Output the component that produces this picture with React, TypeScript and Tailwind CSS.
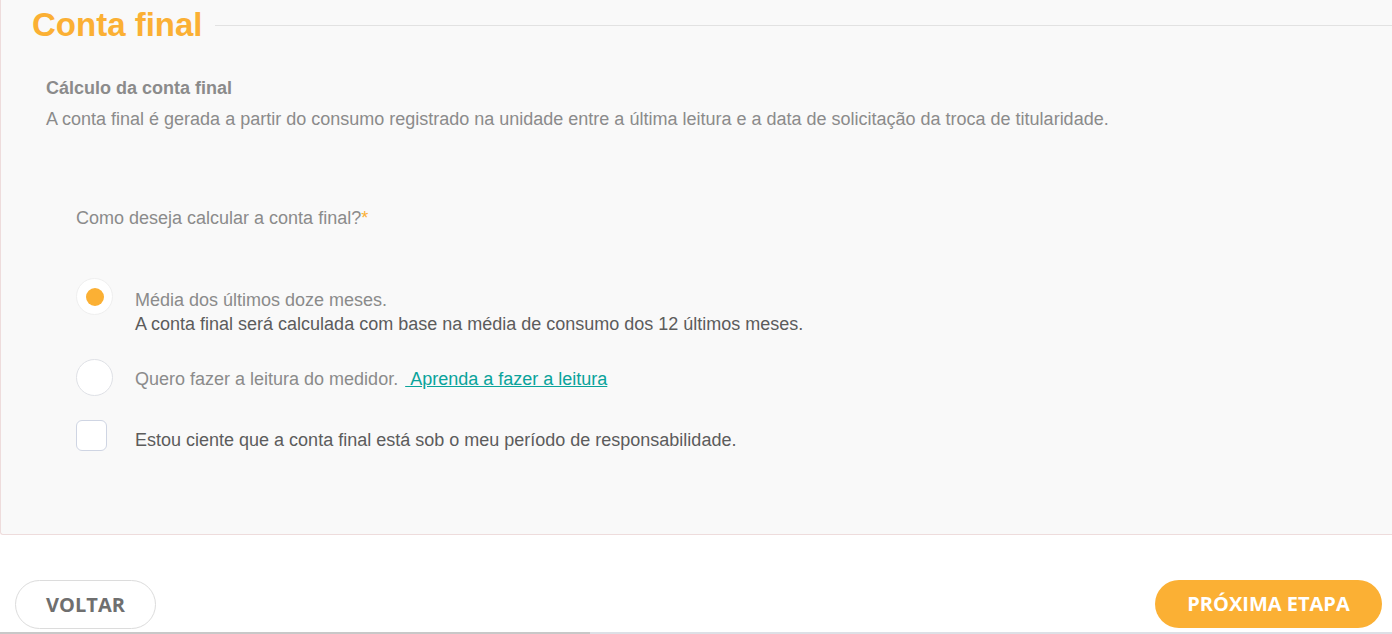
import React, { useState } from 'react';

export default function App() {
  const [option, setOption] = useState<'media' | 'leitura'>('media');
  const [aware, setAware] = useState(false);

  return (
    <div className="w-[1392px] h-[634px] bg-white overflow-hidden flex flex-col font-['Liberation_Sans',Arial,sans-serif]">
      <section className="h-[535px] bg-[#f9f9f9] border-l border-b border-[#eedcdc] rounded-bl-[3px] flex flex-col">
        <div className="flex items-center pl-[31px] pt-[5px]">
          <h1 className="text-[33px] leading-[40px] font-bold text-[#fbb034] pr-[12px]">Conta final</h1>
          <div className="flex-1 h-px bg-[#e2e2e2] mt-[1px]" />
        </div>

        <div className="pl-[45px] pt-[32px]">
          <h2 className="text-[18px] leading-[22px] font-bold text-[#8b8b8b]">Cálculo da conta final</h2>
          <p className="text-[18px] leading-[22px] text-[#8b8b8b] mt-[9px]">
            A conta final é gerada a partir do consumo registrado na unidade entre a última leitura e a data de solicitação da troca de titularidade.
          </p>
        </div>

        <div className="pl-[75px] pt-[77px]">
          <p className="text-[18px] leading-[22px] text-[#8b8b8b]">
            Como deseja calcular a conta final?<span className="text-[#fbb034]">*</span>
          </p>

          <div className="mt-[49px] flex flex-col">
            <button
              onClick={() => setOption('media')}
              className="flex items-start gap-[22px] text-left"
            >
              <span className="w-[37px] h-[37px] shrink-0 rounded-full bg-white border border-[#efefef] flex items-center justify-center">
                {option === 'media' && <span className="w-[18px] h-[18px] rounded-full bg-[#fbb034]" />}
              </span>
              <span className="pt-[10px] text-[18px] leading-[24px]">
                <span className="block text-[#8b8b8b]">Média dos últimos doze meses.</span>
                <span className="block text-[#5c5c5c]">A conta final será calculada com base na média de consumo dos 12 últimos meses.</span>
              </span>
            </button>

            <div className="mt-[23px] flex items-center gap-[22px]">
              <button
                onClick={() => setOption('leitura')}
                className="w-[37px] h-[37px] shrink-0 rounded-full bg-white border border-[#dfe1e6] flex items-center justify-center"
              >
                {option === 'leitura' && <span className="w-[18px] h-[18px] rounded-full bg-[#fbb034]" />}
              </button>
              <span className="text-[18px] leading-[22px] text-[#8b8b8b] mt-[3px]">
                Quero fazer a leitura do medidor.{' '}
                <a href="#" className="ml-[2px] text-[#0aa39b] underline">&nbsp;Aprenda a fazer a leitura</a>
              </span>
            </div>

            <button
              onClick={() => setAware(!aware)}
              className="mt-[24px] flex items-start gap-[28px] text-left"
            >
              <span className="w-[31px] h-[31px] shrink-0 rounded-[6px] bg-white border border-[#cfd5e3] flex items-center justify-center">
                {aware && (
                  <svg width="16" height="16" viewBox="0 0 24 24" fill="none" stroke="#fbb034" strokeWidth="3" strokeLinecap="round" strokeLinejoin="round">
                    <path d="M20 6 9 17l-5-5" />
                  </svg>
                )}
              </span>
              <span className="pt-[9px] text-[18px] leading-[22px] text-[#5c5c5c]">
                Estou ciente que a conta final está sob o meu período de responsabilidade.
              </span>
            </button>
          </div>
        </div>
      </section>

      <div className="flex-1 flex items-start justify-between pl-[15px] pr-[10px] pt-[45px]">
        <button className="w-[141px] h-[49px] rounded-full border border-[#dcdcdc] bg-white text-[#6f6f6f] text-[20px] font-bold font-['Open_Sans',sans-serif]">
          VOLTAR
        </button>
        <button className="w-[227px] h-[48px] rounded-full bg-[#fbb034] text-white text-[20px] font-bold font-['Open_Sans',sans-serif]">
          PRÓXIMA ETAPA
        </button>
      </div>
      <div className="h-[2px] flex">
        <div className="w-[590px] bg-[#c8c8c8]" />
        <div className="flex-1 bg-[#dde0e6]" />
      </div>
    </div>
  );
}
